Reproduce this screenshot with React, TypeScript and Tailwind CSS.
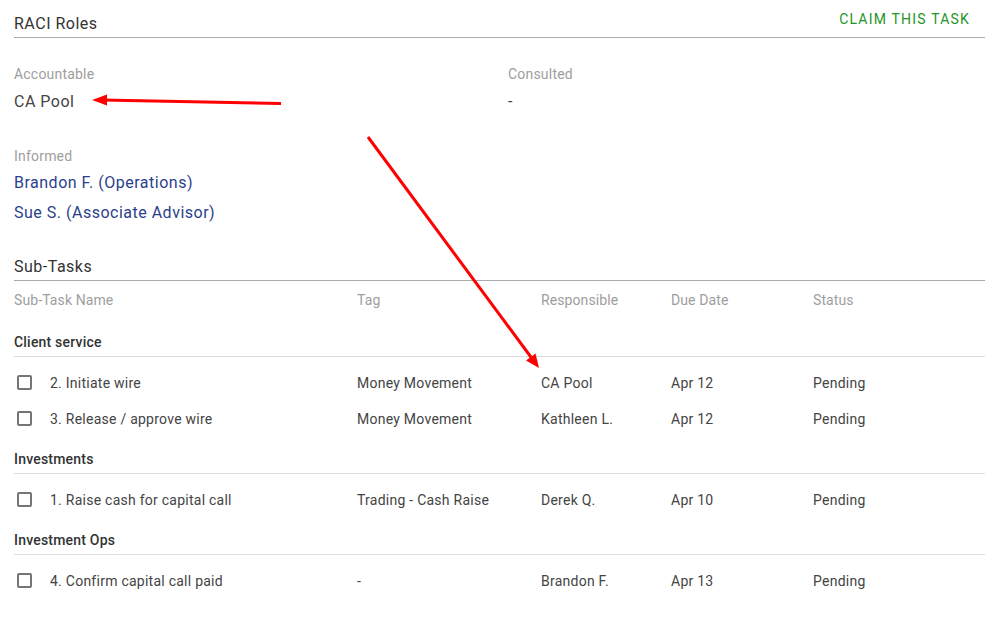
const groups = [
  {
    name: 'Client service',
    rows: [
      { task: '2. Initiate wire', tag: 'Money Movement', who: 'CA Pool', due: 'Apr 12', status: 'Pending' },
      { task: '3. Release / approve wire', tag: 'Money Movement', who: 'Kathleen L.', due: 'Apr 12', status: 'Pending' },
    ],
  },
  {
    name: 'Investments',
    rows: [
      { task: '1. Raise cash for capital call', tag: 'Trading - Cash Raise', who: 'Derek Q.', due: 'Apr 10', status: 'Pending' },
    ],
  },
  {
    name: 'Investment Ops',
    rows: [
      { task: '4. Confirm capital call paid', tag: '-', who: 'Brandon F.', due: 'Apr 13', status: 'Pending' },
    ],
  },
];

const cols = 'grid grid-cols-[343px_184px_130px_142px_1fr] items-center';

function Annotations() {
  return (
    <svg className="absolute inset-0 pointer-events-none" width="1003" height="621">
      <line x1="281" y1="103.5" x2="102" y2="100" stroke="#ff0000" strokeWidth="3" />
      <polygon points="92,100 107,94.5 107,105.5" fill="#ff0000" />
      <line x1="368" y1="137" x2="532" y2="358.5" stroke="#ff0000" strokeWidth="3" />
      <polygon points="539,368 526,360.5 535.5,353.5" fill="#ff0000" />
    </svg>
  );
}

export default function App() {
  return (
    <div className="relative w-[1003px] h-[621px] bg-white overflow-hidden font-['Roboto',_'Liberation_Sans',_sans-serif] text-[#333]">
      <div className="pl-[14px] pr-[18px]">
        <div className="flex justify-between items-end border-b border-[#aaa] h-[38px]">
          <h2 className="text-[16px] leading-[24px] pb-[1px] tracking-[0.5px] text-[#333]">RACI Roles</h2>
          <button className="mb-[10px] mr-[15px] text-[14px] leading-[16px] tracking-[1.2px] text-[#1f9427] uppercase">
            Claim this task
          </button>
        </div>

        <div className="grid grid-cols-[494px_1fr] pt-[26px]">
          <div>
            <div className="text-[14px] leading-[20px] tracking-[0.2px] text-[#9e9e9e]">Accountable</div>
            <div className="mt-[6px] text-[16px] leading-[24px] tracking-[0.5px] text-[#444]">CA Pool</div>
          </div>
          <div>
            <div className="text-[14px] leading-[20px] tracking-[0.2px] text-[#9e9e9e]">Consulted</div>
            <div className="mt-[6px] text-[16px] leading-[24px] text-[#444]">-</div>
          </div>
        </div>

        <div className="mt-[32px]">
          <div className="text-[14px] leading-[20px] tracking-[0.2px] text-[#9e9e9e]">Informed</div>
          <div className="mt-[2px] text-[16px] leading-[30px] tracking-[0.5px] text-[#2b3f8c]">
            <div>Brandon F. (Operations)</div>
            <div>Sue S. (Associate Advisor)</div>
          </div>
        </div>

        <div className="mt-[27px] border-b border-[#aaa] pb-[1px]">
          <h2 className="text-[16px] leading-[24px] tracking-[0.5px] text-[#333]">Sub-Tasks</h2>
        </div>

        <div className={`${cols} h-[38px] text-[14px] tracking-[0.1px] text-[#9e9e9e]`}>
          <div>Sub-Task Name</div>
          <div>Tag</div>
          <div>Responsible</div>
          <div>Due Date</div>
          <div>Status</div>
        </div>

        {groups.map(g => (
          <div key={g.name}>
            <div className="h-[38px] flex items-end pb-[4px] border-b border-[#ddd] text-[14px] leading-[20px] tracking-[0.2px] font-medium text-[#333]">
              {g.name}
            </div>
            <div className="pt-[7px]">
              {g.rows.map(r => (
                <div key={r.task} className={`${cols} h-[36px] pt-[2px] text-[14px] tracking-[0.25px] text-[#444]`}>
                  <div className="flex items-center">
                    <span className="ml-[3px] -mt-[1px] w-[15px] h-[15px] border-2 border-[#757575] rounded-[2px]" />
                    <span className="ml-[18px]">{r.task}</span>
                  </div>
                  <div>{r.tag}</div>
                  <div>{r.who}</div>
                  <div>{r.due}</div>
                  <div>{r.status}</div>
                </div>
              ))}
            </div>
          </div>
        ))}
      </div>
      <Annotations />
    </div>
  );
}
